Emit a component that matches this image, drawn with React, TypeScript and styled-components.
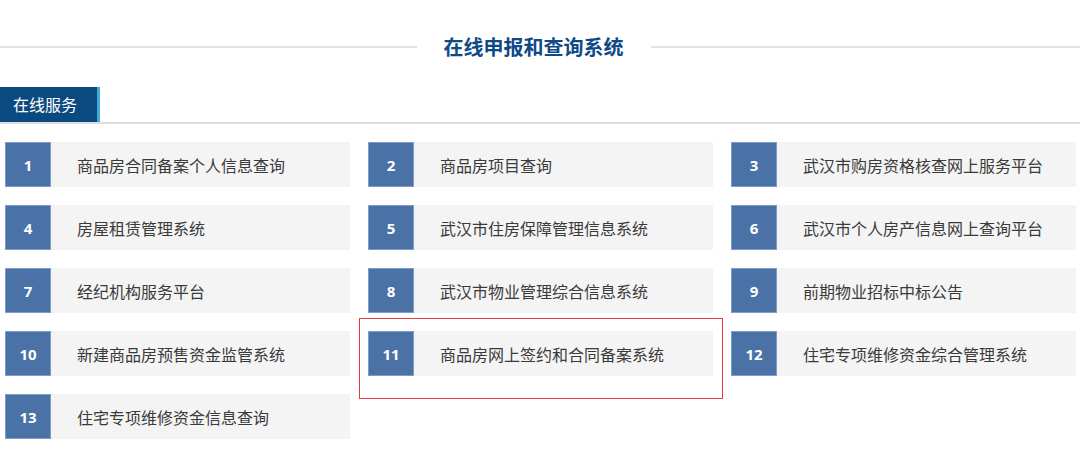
import React from 'react'
import styled, { createGlobalStyle } from 'styled-components'

const GlobalStyle = createGlobalStyle`
  html, body {
    margin: 0;
    padding: 0;
    background: #ffffff;
  }
  body {
    font-family: "Noto Sans CJK SC", "Noto Sans", sans-serif;
  }
`

const services = [
  '商品房合同备案个人信息查询',
  '商品房项目查询',
  '武汉市购房资格核查网上服务平台',
  '房屋租赁管理系统',
  '武汉市住房保障管理信息系统',
  '武汉市个人房产信息网上查询平台',
  '经纪机构服务平台',
  '武汉市物业管理综合信息系统',
  '前期物业招标中标公告',
  '新建商品房预售资金监管系统',
  '商品房网上签约和合同备案系统',
  '住宅专项维修资金综合管理系统',
  '住宅专项维修资金信息查询',
]

const HIGHLIGHTED = 11

export default function App() {
  return (
    <Page>
      <GlobalStyle />
      <TitleRow>
        <Line $grow={417} />
        <Title>在线申报和查询系统</Title>
        <Line $grow={430} />
      </TitleRow>
      <TabBar>
        <Tab>在线服务</Tab>
      </TabBar>
      <Grid>
        {services.map((name, i) => (
          <Cell key={name}>
            <Card>
              <Num>{i + 1}</Num>
              <Name>{name}</Name>
            </Card>
            {i + 1 === HIGHLIGHTED && <Highlight />}
          </Cell>
        ))}
      </Grid>
    </Page>
  )
}

const Page = styled.div`
  width: 1080px;
  height: 465px;
  overflow: hidden;
  padding-top: 32px;
  box-sizing: border-box;
`
const TitleRow = styled.div`
  display: flex;
  align-items: center;
  height: 30px;
  gap: 27px;
`
const Line = styled.div<{ $grow: number }>`
  flex: ${(p) => p.$grow} 1 0;
  height: 2px;
  background: #e3e3e3;
`
const Title = styled.h1`
  margin: 0;
  font-size: 20px;
  font-weight: 700;
  color: #0e4a86;
  line-height: 30px;
`
const TabBar = styled.div`
  margin-top: 25px;
  border-bottom: 2px solid #dddddd;
  display: flex;
`
const Tab = styled.div`
  width: 84px;
  height: 35px;
  padding-left: 13px;
  background: #0b4a80;
  border-right: 3px solid #3fa9dc;
  color: #ffffff;
  font-size: 16px;
  line-height: 35px;
`
const Grid = styled.div`
  display: grid;
  grid-template-columns: repeat(3, 345px);
  column-gap: 18px;
  row-gap: 18px;
  padding: 18px 5px 0;
`
const Cell = styled.div`
  position: relative;
`
const Card = styled.div`
  display: flex;
  align-items: center;
  height: 45px;
  background: #f4f4f4;
`
const Num = styled.div`
  width: 44px;
  height: 43px;
  flex-shrink: 0;
  background: #4a72a6;
  border: 1px solid #7d9cc6;
  color: #ffffff;
  font-family: "Open Sans", "Noto Sans", sans-serif;
  font-weight: 700;
  font-size: 15px;
  display: flex;
  align-items: center;
  justify-content: center;
`
const Name = styled.div`
  margin-left: 26px;
  font-size: 16px;
  color: #3a3a3a;
  white-space: nowrap;
`
const Highlight = styled.div`
  position: absolute;
  top: -13px;
  left: -9px;
  right: -10px;
  bottom: -23px;
  border: 1.5px solid #e8393c;
  pointer-events: none;
`
